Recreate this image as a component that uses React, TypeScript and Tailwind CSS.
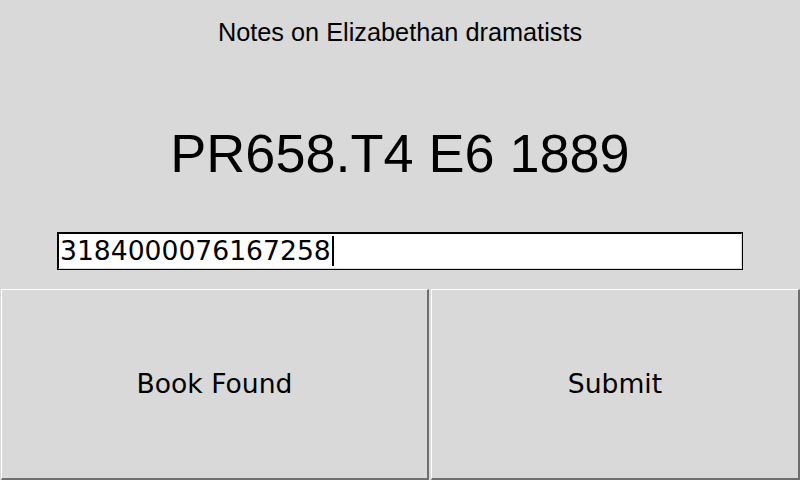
import React from "react";

export default function App() {
  const sans = { fontFamily: '"Liberation Sans", Arial, sans-serif' };
  const deja = { fontFamily: '"DejaVu Sans", sans-serif' };
  return (
    <div className="w-[800px] h-[480px] bg-[#d9d9d9] overflow-hidden flex flex-col">
      <div className="pt-[20px] h-[46px] flex justify-center">
        <div className="text-[25.3px] leading-none text-black whitespace-nowrap" style={sans}>
          Notes on Elizabethan dramatists
        </div>
      </div>
      <div className="pt-[80px] h-[134px] flex justify-center">
        <div className="text-[54px] leading-none text-black whitespace-nowrap" style={sans}>
          PR658.T4 E6 1889
        </div>
      </div>
      <div className="mt-[52px] mx-[57px] h-[38px] border border-black">
        <div className="h-full border-t border-l border-black border-r border-b border-r-[#d9d9d9] border-b-[#d9d9d9] bg-white flex items-center pl-[1px]">
          <span className="text-[26.6px] leading-none text-black whitespace-nowrap" style={deja}>
            3184000076167258
          </span>
          <span className="w-[2px] h-[30px] bg-black ml-px" />
        </div>
      </div>
      <div className="mt-[18px] h-[192px] flex">
        <div className="w-[430px] h-full pl-px pt-px pr-px">
          <div className="h-full border-t border-l border-white border-r-2 border-b-2 border-r-[#6e6e6e] border-b-[#6e6e6e] flex items-center justify-center">
            <span className="text-[26.6px] text-black" style={deja}>Book Found</span>
          </div>
        </div>
        <div className="flex-1 h-full pl-px pt-px">
          <div className="h-full border-t border-l border-white border-r-2 border-b-2 border-r-[#6e6e6e] border-b-[#6e6e6e] flex items-center justify-center">
            <span className="text-[26.6px] text-black" style={deja}>Submit</span>
          </div>
        </div>
      </div>
    </div>
  );
}
